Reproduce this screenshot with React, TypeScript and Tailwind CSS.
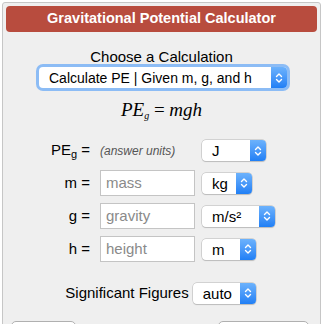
import React from "react"

function Chevrons() {
  return (
    <svg width="8" height="12" viewBox="0 0 8 12" fill="none" stroke="white" strokeWidth="1.4" strokeLinecap="round" strokeLinejoin="round">
      <path d="M1.5 4.5 L4 2 L6.5 4.5" />
      <path d="M1.5 7.5 L4 10 L6.5 7.5" />
    </svg>
  )
}

function FakeSelect({
  value,
  width,
  focused = false,
  textSize = "text-[15px]",
}: {
  value: string
  width: string
  focused?: boolean
  textSize?: string
}) {
  return (
    <div
      className={`flex h-[21px] ${width} items-stretch rounded-[4px] bg-white shadow-[0_0_0_0.5px_#b5b5b5,0_1px_1px_rgba(0,0,0,0.18)] ${
        focused ? "ring-[3px] ring-[#8cbcf5]" : ""
      }`}
    >
      <span className={`flex flex-1 items-center pl-[10px] ${textSize} leading-none text-black`}>{value}</span>
      <span className="flex w-[16px] items-center justify-center rounded-r-[4px] bg-gradient-to-b from-[#6cb2fc] to-[#1f7ff5]">
        <Chevrons />
      </span>
    </div>
  )
}

function InputRow({ label, placeholder, unit, unitWidth }: { label: string; placeholder: string; unit: string; unitWidth: string }) {
  return (
    <div className="flex h-[26px] items-center">
      <span className="w-[48px] pr-[1px] text-right text-[15px] text-black">{label}</span>
      <div className="ml-[9px] flex h-[26px] w-[95px] items-center border border-[#c4c4c4] bg-white pl-[5px] text-[15px] text-[#8a8a8a]">
        {placeholder}
      </div>
      <div className="ml-[7px]">
        <FakeSelect value={unit} width={unitWidth} />
      </div>
    </div>
  )
}

export default function App() {
  return (
    <div className="h-[324px] w-[324px] overflow-hidden bg-white pl-[2px] pr-[3px] pt-[2px] font-['Liberation_Sans',Arial,sans-serif]">
      <div className="h-[340px] rounded-[3px] border border-[#c6c6c6] bg-[#efefef] px-[3px] pt-[3px]">
        <div className="flex h-[26px] items-center justify-center rounded-[4px] bg-[#b84c3e] text-[14.5px] font-bold text-white">
          Gravitational Potential Calculator
        </div>

        <div className="mt-[16px] text-center text-[15px] leading-[18px] text-black">Choose a Calculation</div>
        <div className="mt-[1px] flex justify-center pl-[3px]">
          <FakeSelect value="Calculate PE | Given m, g, and h" width="w-[248px]" focused textSize="text-[14px]" />
        </div>

        <div className="mt-[11px] text-center font-['Liberation_Serif',serif] text-[19px] italic leading-[22px] text-black">
          PE<sub className="text-[10px] italic">g</sub> <span className="not-italic">=</span> mgh
        </div>

        <div className="ml-[37px] mt-[19px] flex flex-col">
          <div className="flex h-[21px] items-center">
            <span className="w-[48px] pr-[1px] text-right text-[15px] text-black">
              PE<sub className="text-[11px]">g</sub> =
            </span>
            <span className="ml-[9px] w-[95px] text-[12px] italic text-[#555]">(answer units)</span>
            <div className="ml-[7px]">
              <FakeSelect value="J" width="w-[64px]" />
            </div>
          </div>
          <div className="mt-[9px] flex flex-col gap-[7px]">
            <InputRow label="m =" placeholder="mass" unit="kg" unitWidth="w-[50px]" />
            <InputRow label="g =" placeholder="gravity" unit="m/s²" unitWidth="w-[73px]" />
            <InputRow label="h =" placeholder="height" unit="m" unitWidth="w-[54px]" />
          </div>
        </div>

        <div className="mt-[20px] flex items-center justify-center gap-[4px] pr-[2px]">
          <span className="text-[15px] text-black">Significant Figures</span>
          <FakeSelect value="auto" width="w-[63px]" />
        </div>

        <div className="mt-[16px] flex justify-between px-[5px]">
          <div className="h-[24px] w-[65px] rounded-[5px] border border-[#b0b0b0] bg-white" />
          <div className="mr-[3px] h-[24px] w-[91px] rounded-[5px] border border-[#b0b0b0] bg-white" />
        </div>
      </div>
    </div>
  )
}
